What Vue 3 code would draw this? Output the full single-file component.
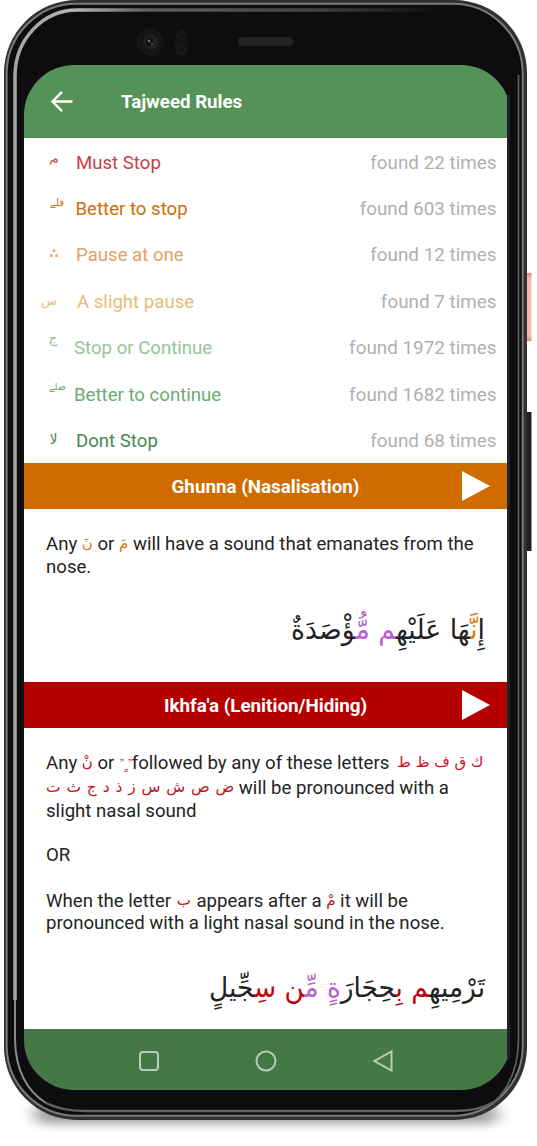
<script setup>
const stops = [
  { mark: 'م', label: 'Must Stop', count: 22, tone: 'red', x: 51, y: -3, s: 13, turn: 25, gap: 76 },
  { mark: 'قلے', label: 'Better to stop', count: 603, tone: 'orange', x: 50, y: -7, s: 10, gap: 75.5 },
  { mark: '∴', label: 'Pause at one', count: 12, tone: 'peach', x: 49.5, y: -1, s: 13, bold: true, gap: 76 },
  { mark: 'س', label: 'A slight pause', count: 7, tone: 'sand', x: 41, y: 0, s: 13, gap: 77 },
  { mark: 'ج', label: 'Stop or Continue', count: 1972, tone: 'mint', x: 48.5, y: -9, s: 14, gap: 74 },
  { mark: 'صلے', label: 'Better to continue', count: 1682, tone: 'leaf', x: 48.5, y: -8, s: 9.5, gap: 74 },
  { mark: 'لا', label: 'Dont Stop', count: 68, tone: 'green', x: 49.5, y: -1, s: 14, gap: 76 },
]
const tanween = '\u00a0\u064b\u00a0\u064d\u00a0\u064b'
</script>

<template>
  <div class="stage">
    <svg class="frame" width="537" height="1146" viewBox="0 0 537 1146" aria-hidden="true">
      <defs>
        <linearGradient id="rim" x1="0" y1="0" x2="1" y2="0">
          <stop offset="0" stop-color="#a5a5a5" /><stop offset=".15" stop-color="#b5b5b5" /><stop offset=".3" stop-color="#606060" />
          <stop offset=".7" stop-color="#444" /><stop offset="1" stop-color="#0d0d0f" />
        </linearGradient>
        <linearGradient id="power" x1="0" y1="0" x2="0" y2="1">
          <stop offset="0" stop-color="#dc8787" /><stop offset=".08" stop-color="#f6b9ae" />
          <stop offset=".92" stop-color="#f6b9ae" /><stop offset="1" stop-color="#dc8787" />
        </linearGradient>
        <filter id="soft" x="-10%" y="-200%" width="120%" height="500%"><feGaussianBlur stdDeviation="8 5" /></filter>
      </defs>
      <rect x="34" y="1104" width="464" height="20" rx="10" fill="#000" opacity=".36" filter="url(#soft)" />
      <rect x="525" y="273" width="6.500" height="68" fill="url(#power)" />
      <rect x="524" y="412" width="7.500" height="139" fill="#202020" />
      <rect x="4" y="0" width="523" height="1120" rx="73" fill="#313131" />
      <rect x="6.700" y="3.700" width="516" height="1112" rx="70" fill="#0d0d0f" stroke="#7a7a7a" stroke-width="2" />
      <rect x="9" y="6" width="511" height="1108" rx="67" fill="#0d0d0f" />
      <path d="M15 75V1040Q16 1084 46 1103" fill="none" stroke="#8a8a8a" stroke-width="2" />
      <path d="M15 1000V76A62 66 0 0 1 77 10H440" fill="none" stroke="url(#rim)" stroke-width="3.500" />
      <path d="M518.500 75V1040Q518 1080 494 1102" fill="none" stroke="#5c5c5c" stroke-width="1.800" />
      <path d="M46 1103Q62 1111 85 1111H455Q478 1111 494 1102" fill="none" stroke="#626262" stroke-width="2.500" />
      <rect x="507" y="95" width="3" height="965" fill="#1b222b" />
      <circle cx="150" cy="42" r="14" fill="#141516" />
      <circle cx="150.500" cy="42" r="7.500" fill="#222223" /><circle cx="149.500" cy="41.500" r="4" fill="#101011" />
      <circle cx="149" cy="41" r="1.300" fill="#777" /><circle cx="152" cy="44" r="1.300" fill="#444" />
      <rect x="175" y="29" width="13" height="27" rx="6.500" fill="#121314" />
      <circle cx="181.500" cy="35.500" r="4" fill="none" stroke="#1d1e1f" /><circle cx="181.500" cy="50" r="4" fill="none" stroke="#1d1e1f" />
      <rect x="238" y="37" width="55.500" height="9" rx="4.500" fill="#222" />
    </svg>

    <main class="screen">
      <header class="bar">
        <svg class="back" width="24" height="24" viewBox="0 0 24 24"><path d="M22.500 11.500H3M12 1.800L2.500 11.500L12 21.200" fill="none" stroke="#fff" stroke-width="2.400" /></svg>
        <h1>Tajweed Rules</h1>
      </header>

      <ul class="stops">
        <li v-for="r in stops" :key="r.label">
          <span class="lead" :style="{ width: r.gap - 24 + 'px' }"><svg width="52" height="46" viewBox="24 -23 52 46">
            <text :x="r.x" :y="r.y + 4" :font-size="r.s" :font-weight="r.bold ? 700 : 400" :class="r.tone" :transform="r.turn ? `rotate(${r.turn} 55 -2)` : undefined">{{ r.mark }}</text>
          </svg></span>
          <span class="label" :class="r.tone">{{ r.label }}</span>
          <span class="count">found {{ r.count }} times</span>
        </li>
      </ul>

      <section class="rule">
        <h2 class="ghunna"><span>Ghunna (Nasalisation)</span><svg width="28" height="32" viewBox="0 0 28 32"><path d="M0 1L28 16L0 31Z" fill="#fff" /></svg></h2>
        <div class="copy">
          <p>Any <b class="o">نَ</b> or <b class="o">مَ</b> will have a sound that emanates from the</p>
          <p>nose.</p>
        </div>
        <svg class="verse" width="483" height="90" viewBox="0 0 483 90">
          <text x="461" y="61" direction="rtl" textLength="194" lengthAdjust="spacingAndGlyphs">إِ<tspan class="vo">نَّ</tspan>هَا عَلَيْهِ<tspan class="vp">م</tspan> <tspan class="vp">مُّ</tspan>ؤْصَدَةٌ</text>
        </svg>
      </section>

      <section class="rule second">
        <h2 class="ikhfa"><span>Ikhfa'a (Lenition/Hiding)</span><svg width="28" height="32" viewBox="0 0 28 32"><path d="M0 1L28 16L0 31Z" fill="#fff" /></svg></h2>
        <div class="copy">
          <p>Any <b>نْ</b> or <b class="marks">{{ tanween }}</b>followed by any of these letters <b dir="rtl" class="shift">ك ق ف ظ ط</b></p>
          <p class="gap"><b dir="rtl" class="wide">ض ص ش س ز ذ د ج ث ت</b> will be pronounced with a</p>
          <p>slight nasal sound</p>
          <p class="or">OR</p>
          <p>When the letter <b class="ba">ب</b> appears after a <b>مْ</b> it will be</p>
          <p>pronounced with a light nasal sound in the nose.</p>
        </div>
        <svg class="verse" width="483" height="90" viewBox="0 0 483 90">
          <text x="461" y="62" direction="rtl" textLength="276" lengthAdjust="spacingAndGlyphs">تَرْمِيهِ<tspan class="vr">م</tspan> <tspan class="vr">بِ</tspan>حِجَارَ<tspan class="vp">ةٍ</tspan> <tspan class="vp">مِّ</tspan><tspan class="vr">ن</tspan> <tspan class="vr">سِ</tspan>جِّيلٍ</text>
        </svg>
      </section>

      <footer class="nav">
        <svg width="22" height="22" viewBox="0 0 22 22"><rect x="2" y="2" width="18" height="18" rx="3" /></svg>
        <svg width="22" height="22" viewBox="0 0 22 22"><circle cx="11" cy="11" r="9.500" /></svg>
        <svg width="22" height="22" viewBox="0 0 22 22"><path d="M19.500 1.500V20.500L2.500 11Z" /></svg>
      </footer>
    </main>
  </div>
</template>

<style>
body { margin: 0; background: #fff; }
</style>

<style scoped>
.stage { position: relative; width: 537px; height: 1146px; overflow: hidden; box-sizing: border-box; padding: 65px 0 0 24px; font-family: Roboto, "DejaVu Sans", sans-serif; color: #242424; }
.frame { position: absolute; left: 0; top: 0; }
.screen { position: relative; width: 487px; height: 1025px; overflow: hidden; border-radius: 50px; clip-path: inset(0 4px 0 0); display: flex; flex-direction: column; }
.screen > * { width: 483px; box-sizing: border-box; }
.bar { height: 73px; flex: none; background: #549257; display: flex; align-items: center; padding-left: 26px; color: #fff; }
.screen > .bar, .screen > .nav { width: 487px; }
h1 { font-size: 18.700px; font-weight: 700; margin: 0 0 0 47px; }
.stops { list-style: none; margin: 0; padding: 1px 0 0; height: 325px; flex: none; background: #fff; }
.stops li { height: 46.400px; display: flex; align-items: center; font-size: 18.850px; padding-right: 10.500px; }
.label, .count { position: relative; top: .4px; }
.label { font-size: 18.620px; }
.lead { flex: none; height: 46px; }
.lead text { font-family: "DejaVu Sans", sans-serif; }
.count { margin-left: auto; color: #b0b0b0; }
.red { color: #cb3f46; fill: #cb3f46; }
.orange { color: #d06d08; fill: #d06d08; }
.peach { color: #e3a065; fill: #e3a065; }
.sand { color: #e6be73; fill: #e6be73; }
.mint { color: #96c399; fill: #96c399; }
.leaf { color: #6cab70; fill: #6cab70; }
.green { color: #46894b; fill: #46894b; }
.rule { height: 219px; flex: none; background: #fff; }
.second { height: 347px; }
h2 { margin: 0; height: 46px; box-sizing: border-box; padding-top: 2px; color: #fff; font-size: 18.800px; font-weight: 700; display: flex; align-items: center; justify-content: center; position: relative; }
h2 svg { position: absolute; right: 17px; top: 7px; }
.ghunna { background: #d06b00; }
.ikhfa { background: #b50000; }
.copy { padding: 24px 0 0 22px; font-size: 18.620px; line-height: 22.700px; white-space: nowrap; }
.copy p { margin: 0; height: 22.700px; }
.copy .gap { padding-top: 2.500px; }
.copy .or { margin: 21px 0 23.500px; }
.copy b { font-weight: 400; color: #c8101c; font-family: "DejaVu Sans", sans-serif; font-size: 15px; line-height: 1; position: relative; top: -2px; }
.copy b.o { color: #df7a14; }
.copy .marks { font-size: 12.500px; top: 0; margin-right: .8px; }
.copy .wide { font-size: 15.500px; word-spacing: .9px; }
.copy .shift { margin-left: 3px; }
.copy .ba { margin: 0 1px; }
.verse { display: block; }
.verse text { font-size: 28px; font-family: "DejaVu Sans", sans-serif; fill: #222; }
.verse .vo { fill: #e07c10; }
.verse .vp { fill: #b85fd0; }
.verse .vr { fill: #c00010; }
.nav { height: 61px; flex: none; background: #447845; display: flex; align-items: center; justify-content: center; gap: 95px; padding: 3px 3px 0 0; }
.nav svg { fill: none; stroke: #b7cdb7; stroke-width: 2; }
</style>
